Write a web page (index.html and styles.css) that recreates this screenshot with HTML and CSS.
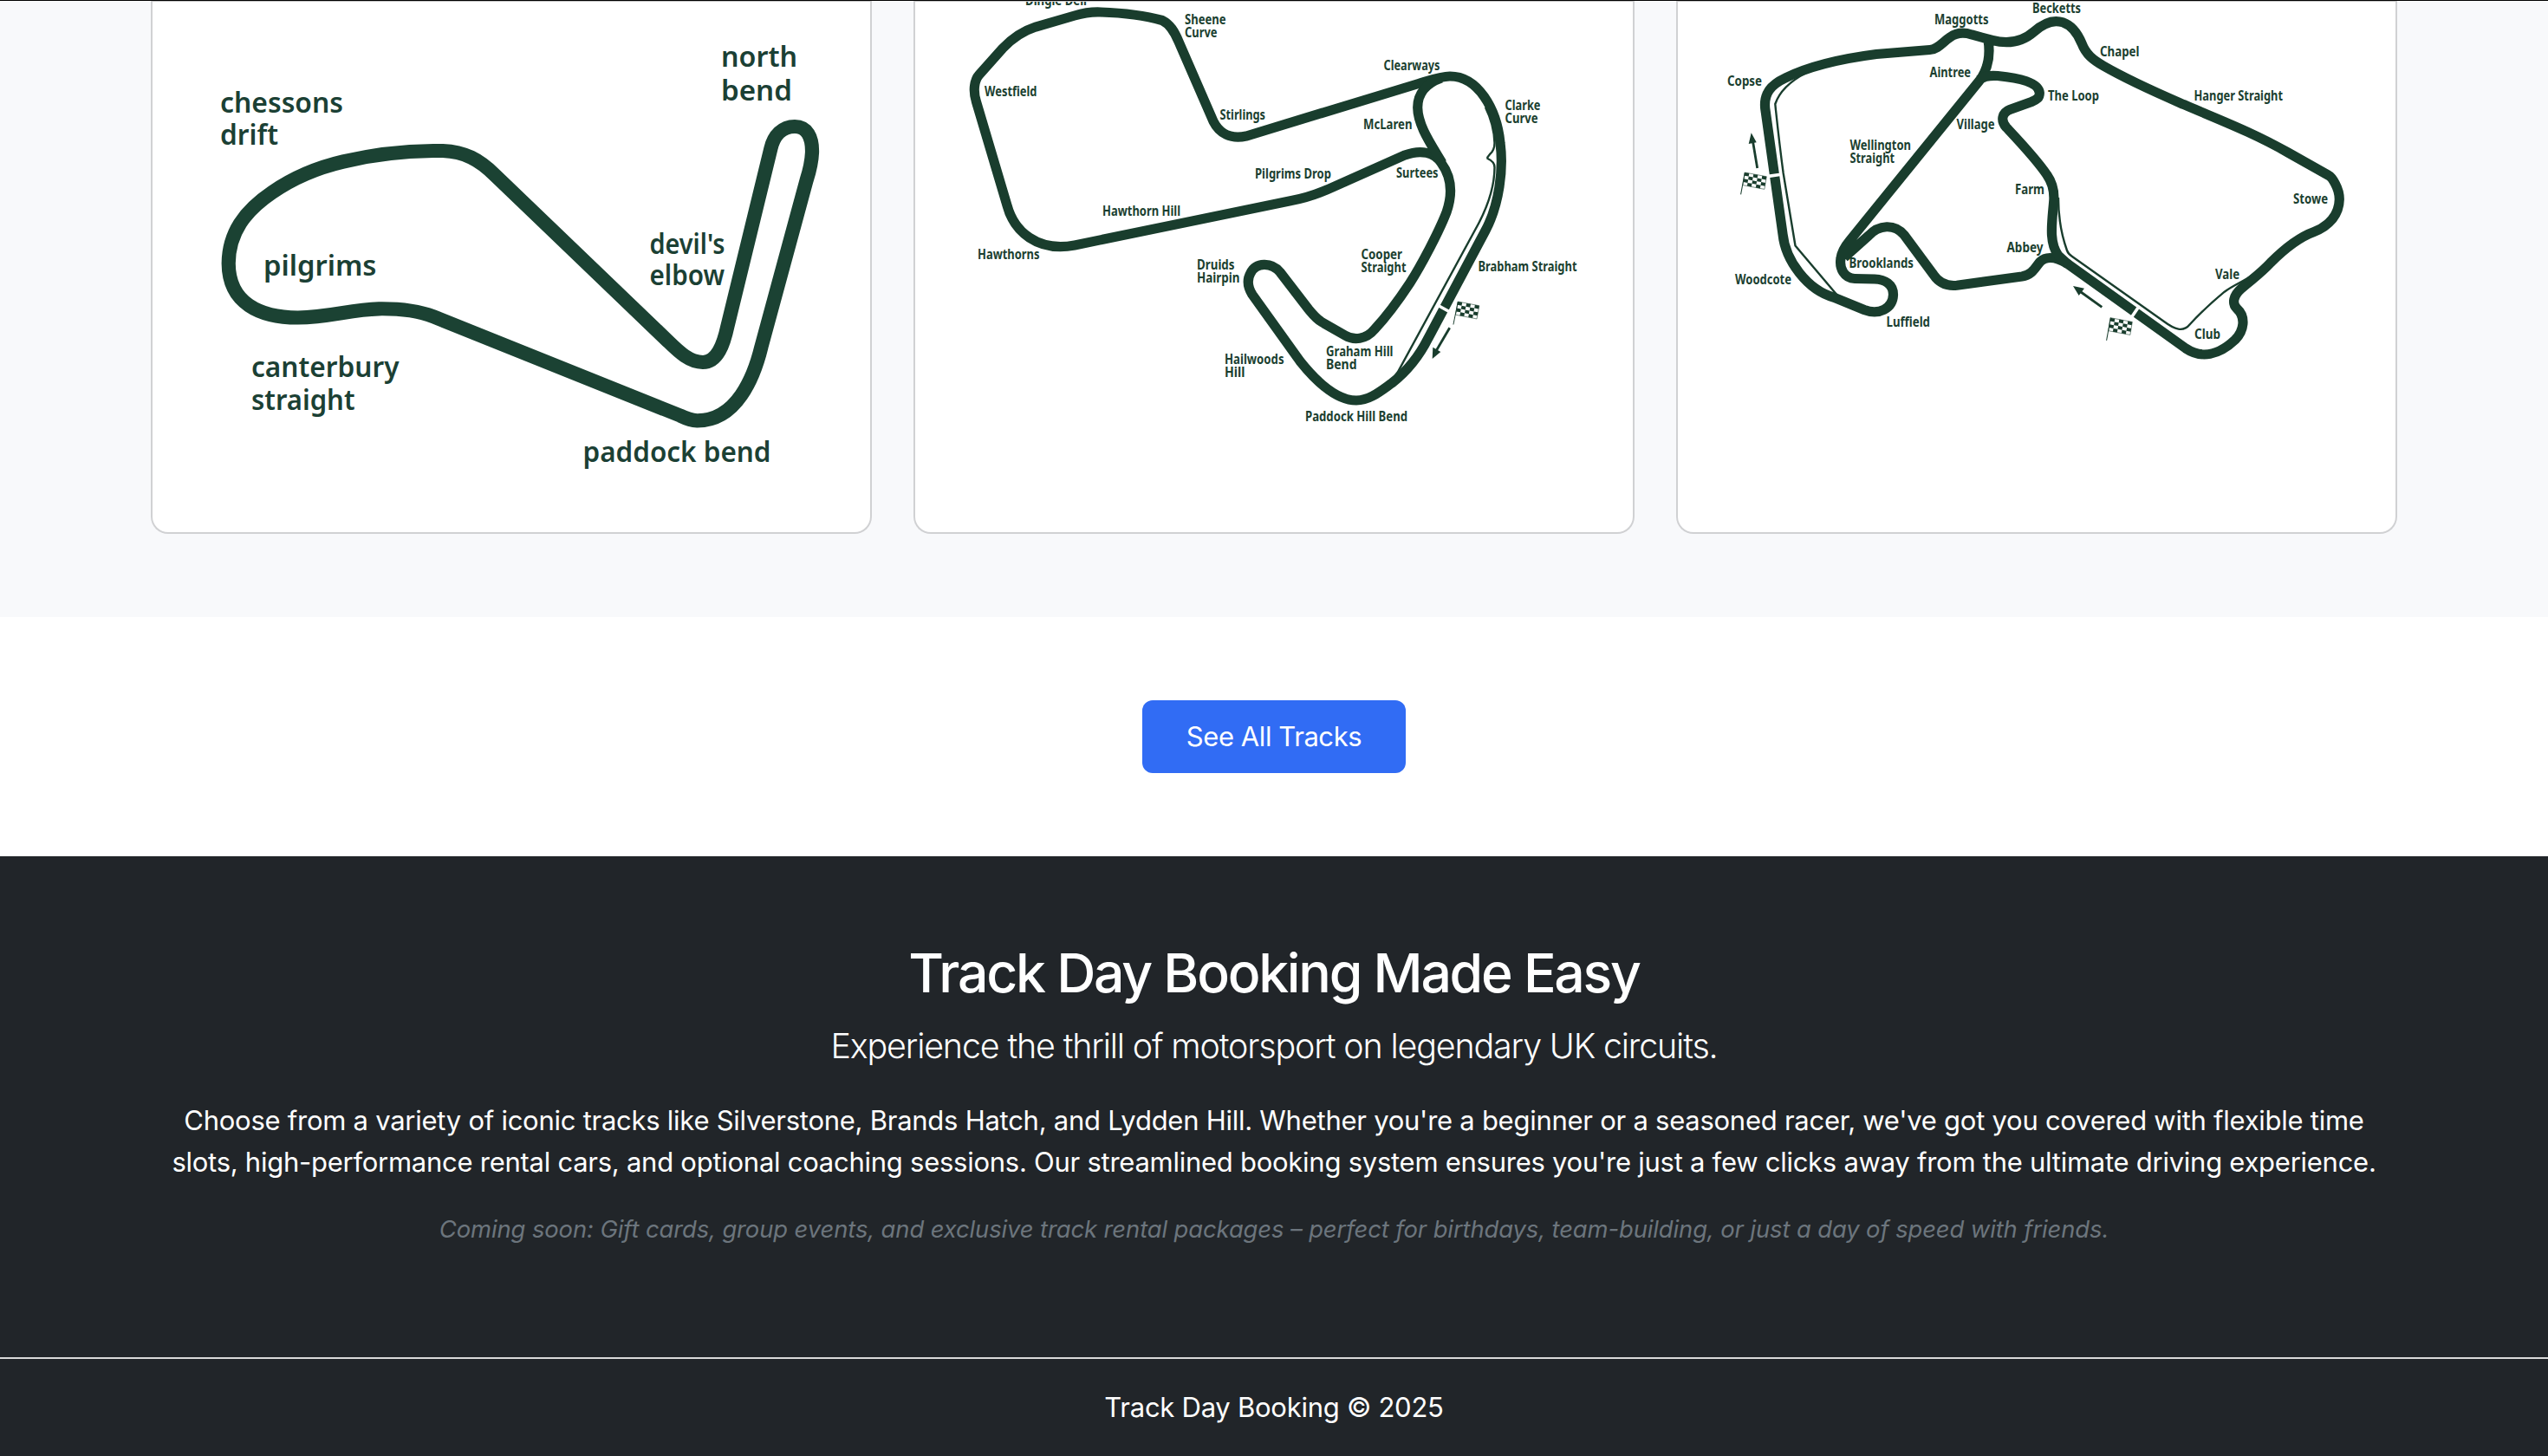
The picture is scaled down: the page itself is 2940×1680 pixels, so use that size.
FILE: index.html
```html
<!DOCTYPE html>
<html lang="en">
<head>
<meta charset="utf-8">
<title>Track Day Booking</title>
<link rel="stylesheet" href="styles.css">
</head>
<body>
<svg class="defs" width="0" height="0" aria-hidden="true">
  <defs>
    <g id="flag">
      <rect class="flag-cloth" width="5" height="4"/>
      <path class="flag-checks" d="M0 0h1v1h-1zM2 0h1v1h-1zM4 0h1v1h-1zM1 1h1v1h-1zM3 1h1v1h-1zM0 2h1v1h-1zM2 2h1v1h-1zM4 2h1v1h-1zM1 3h1v1h-1zM3 3h1v1h-1z"/>
      <path class="flag-pole" d="M0 0L-.1 7"/>
    </g>
  </defs>
</svg>

<section class="tracks">
  <div class="container track-grid">
    <article class="card">
      <svg class="map map-lydden" viewBox="176 2 828 612" role="img" aria-label="Lydden Hill">
        <path class="road" d="M263.7 304C264 268 283 243 314 222C340 204 368 193 396 186.5C425 179.5 460 174.5 500 174L511 174C536 175 553 184 571 202L768.8 391.8C782 404.5 794 417.5 811 418C828 418 835 397 839.5 376L889.4 171.4C893 156 903 146 917 146C931 146 937.5 158 937 176C936.5 188 933.5 199 930.6 208L878.5 400C870 435 850 485.5 804.4 485.3C797 485 791 482.5 785 479.6L500 365.3C480 357.5 460 356 437 356.3C405 357 380 366 343.7 366.5C300 366.5 264 350 263.7 304Z"/>
        <g class="names">
          <text x="254" y="130" textLength="142" lengthAdjust="spacingAndGlyphs">chessons</text>
          <text x="254" y="167" textLength="67" lengthAdjust="spacingAndGlyphs">drift</text>
          <text x="304" y="318" textLength="130.5" lengthAdjust="spacingAndGlyphs">pilgrims</text>
          <text x="290" y="435" textLength="170.5" lengthAdjust="spacingAndGlyphs">canterbury</text>
          <text x="290" y="473" textLength="119.5" lengthAdjust="spacingAndGlyphs">straight</text>
          <text x="832" y="77" textLength="88" lengthAdjust="spacingAndGlyphs">north</text>
          <text x="832" y="115.5" textLength="82" lengthAdjust="spacingAndGlyphs">bend</text>
          <text x="749.5" y="292.5" textLength="87" lengthAdjust="spacingAndGlyphs">devil's</text>
          <text x="749.5" y="328.5" textLength="86.5" lengthAdjust="spacingAndGlyphs">elbow</text>
          <text x="672.5" y="533" textLength="217" lengthAdjust="spacingAndGlyphs">paddock bend</text>
        </g>
      </svg>
    </article>

    <article class="card">
      <svg class="map" viewBox="1056 2 828 612" role="img" aria-label="Brands Hatch">
        <path class="road" d="M1270 14C1258 13.5 1250 15 1240 18L1195 31C1178 36.5 1167 45 1156.7 56L1130 86C1124 92.5 1122.5 105 1126.5 117.5L1162 237C1170 267 1197 291 1240 283L1490 231.5C1510 228 1525 222 1540 215L1621 179C1640 172 1655 176 1663 188C1674 203 1677 222 1669 245C1660 268 1640 306 1626.7 326.7C1612 349 1599 366 1586 380C1576 392 1562 393 1552 387L1525 371.5C1519 368 1515 363 1510 357L1477 314C1467 302 1449 302.5 1443 315C1439 322 1439.5 331 1445 340L1500 416.7C1521 443 1543 462 1565 462C1580 462 1592 452 1606 442C1624 428 1638 410 1648 390L1714 266C1730 236 1735 195 1731 165C1727 125 1705 88 1673 88C1662 88 1650 92.5 1636.7 96.5L1438 157C1420 161 1407 154 1400 140L1360 48C1355 36 1350 28 1341 23.5C1325 19 1300 15 1270 14Z"/>
        <path class="road" d="M1663 90C1646 96 1635.7 108 1635.7 124C1636 145 1651 166 1664 188"/>
        <path class="pit" d="M1714 124C1721 138 1724 150 1724.5 165C1724.5 172 1722 175.5 1719 178L1716.3 181.5L1716.5 183C1721 185 1724.5 188 1724.5 193C1724.5 215 1718 235 1706 258L1613 429L1604 441"/>
        <path class="line" d="M1659.5 352.5L1672.5 359.8"/>
        <path class="shaft" d="M1672.7 378.3L1657 405"/>
        <path class="head" d="M1652.7 414L1653.3 400.7L1662.3 406Z"/>
        <use href="#flag" transform="matrix(4.9 .95 -.7 3.8 1682.3 348)"/>
        <g class="names small">
          <text x="1183" y="5.5" textLength="71" lengthAdjust="spacingAndGlyphs">Dingle Dell</text>
          <text x="1367" y="28" textLength="47.5" lengthAdjust="spacingAndGlyphs">Sheene</text>
          <text x="1367" y="42.8" textLength="37.5" lengthAdjust="spacingAndGlyphs">Curve</text>
          <text x="1136" y="111" textLength="60.5" lengthAdjust="spacingAndGlyphs">Westfield</text>
          <text x="1407.5" y="137.7" textLength="52.5" lengthAdjust="spacingAndGlyphs">Stirlings</text>
          <text x="1448" y="205.7" textLength="88" lengthAdjust="spacingAndGlyphs">Pilgrims Drop</text>
          <text x="1272" y="249.3" textLength="90" lengthAdjust="spacingAndGlyphs">Hawthorn Hill</text>
          <text x="1128" y="299" textLength="71.5" lengthAdjust="spacingAndGlyphs">Hawthorns</text>
          <text x="1381" y="310.7" textLength="43.5" lengthAdjust="spacingAndGlyphs">Druids</text>
          <text x="1381" y="325.7" textLength="49.5" lengthAdjust="spacingAndGlyphs">Hairpin</text>
          <text x="1596.5" y="80.5" textLength="65" lengthAdjust="spacingAndGlyphs">Clearways</text>
          <text x="1573" y="149" textLength="56.5" lengthAdjust="spacingAndGlyphs">McLaren</text>
          <text x="1611" y="205" textLength="48.5" lengthAdjust="spacingAndGlyphs">Surtees</text>
          <text x="1736.5" y="127" textLength="41" lengthAdjust="spacingAndGlyphs">Clarke</text>
          <text x="1736.5" y="142" textLength="38" lengthAdjust="spacingAndGlyphs">Curve</text>
          <text x="1570.5" y="299" textLength="47.5" lengthAdjust="spacingAndGlyphs">Cooper</text>
          <text x="1570.5" y="314" textLength="52" lengthAdjust="spacingAndGlyphs">Straight</text>
          <text x="1705.5" y="313" textLength="114" lengthAdjust="spacingAndGlyphs">Brabham Straight</text>
          <text x="1530" y="411" textLength="77.5" lengthAdjust="spacingAndGlyphs">Graham Hill</text>
          <text x="1530" y="426" textLength="35.5" lengthAdjust="spacingAndGlyphs">Bend</text>
          <text x="1413" y="419.5" textLength="68.5" lengthAdjust="spacingAndGlyphs">Hailwoods</text>
          <text x="1413" y="434.5" textLength="23.5" lengthAdjust="spacingAndGlyphs">Hill</text>
          <text x="1506" y="486" textLength="118" lengthAdjust="spacingAndGlyphs">Paddock Hill Bend</text>
        </g>
      </svg>
    </article>

    <article class="card">
      <svg class="map" viewBox="1936 2 828 612" role="img" aria-label="Silverstone">
        <path class="road" d="M2128 297L2156 272C2168 259 2186 258 2197 271L2231 317C2237 326 2246 330.5 2258 329.3L2333 319C2345 317 2348 309 2354 302C2362 294 2375 298 2385 304L2522 402C2540 414 2560 410 2579 392C2589 382 2592 366 2581 356C2575 350 2577 341 2586 333C2600 321 2609 315 2620 303C2632 291 2652 274 2670 267.5C2687 261 2699 248 2699.3 230C2699.3 216 2690 204 2687 202.5L2640 176C2600 153 2560 138 2520 120.7C2500 112 2460 95 2427 76C2415 69 2407 63 2402 50C2392 26 2372 14 2347 36.5C2335 47 2320 52 2299 46.5L2275 40C2266 37 2257 38 2250 43C2242 48 2236 57 2226.7 57.5L2165 62.5C2130 67 2090 75 2060 90C2043 98 2035 108 2036.7 125L2057 270C2060 300 2085 335 2117 343.5L2151 357.5C2168 364 2184 356 2184.5 340C2184.5 328 2175 322.5 2163 322L2140 321.5C2128 321 2122 310 2124 298C2125 290 2129 284 2134 278L2284 93C2293 81 2297 65 2294 46"/>
        <path class="road" d="M2284 92C2290 87 2297 87 2305 87.5C2330 90 2352 95 2353.3 107C2353.5 113 2350 115 2344 117.5L2319 126.5C2310 130 2308 139 2315 147C2330 163 2350 184 2362 202C2369 212 2371 222 2369.5 235C2367.5 258 2364 280 2375 295L2386 305"/>
        <path class="pit" d="M2084 84C2065 94 2053 106 2048.3 120L2049 127C2052 155 2055 180 2057.7 200L2071.5 283.5L2121 342"/>
        <path class="pit" d="M2375 228C2375 252 2380 275 2385 289C2386 292 2388 294 2391 296L2497 371C2509 380 2519 384 2527 374C2537 363 2552 349 2566.7 336.7C2577 329 2588 325 2600 317"/>
        <path class="line" d="M2040.5 203.4L2055 201.3M2467 355L2458.5 367.5"/>
        <path class="shaft" d="M2027.7 194L2022.5 163M2425.3 354.3L2399 335.5"/>
        <path class="head" d="M2020.7 153.3L2017.7 166L2026.7 164.3ZM2392 330L2405 332.7L2398.7 341Z"/>
        <use href="#flag" transform="matrix(5 .95 -.6 3.65 2013.3 199)"/>
        <use href="#flag" transform="matrix(5 .95 -.6 3.75 2435.3 366.7)"/>
        <g class="names small">
          <text x="2232" y="27.5" textLength="62.5" lengthAdjust="spacingAndGlyphs">Maggotts</text>
          <text x="2345" y="15" textLength="56" lengthAdjust="spacingAndGlyphs">Becketts</text>
          <text x="2226.5" y="88.5" textLength="47.5" lengthAdjust="spacingAndGlyphs">Aintree</text>
          <text x="1993" y="99" textLength="40" lengthAdjust="spacingAndGlyphs">Copse</text>
          <text x="2257.5" y="149" textLength="44" lengthAdjust="spacingAndGlyphs">Village</text>
          <text x="2363" y="115.5" textLength="59" lengthAdjust="spacingAndGlyphs">The Loop</text>
          <text x="2423" y="65" textLength="45.5" lengthAdjust="spacingAndGlyphs">Chapel</text>
          <text x="2531.5" y="115.5" textLength="102.5" lengthAdjust="spacingAndGlyphs">Hanger Straight</text>
          <text x="2134.5" y="173" textLength="70.5" lengthAdjust="spacingAndGlyphs">Wellington</text>
          <text x="2134.5" y="188" textLength="51.5" lengthAdjust="spacingAndGlyphs">Straight</text>
          <text x="2325" y="224" textLength="34" lengthAdjust="spacingAndGlyphs">Farm</text>
          <text x="2315.5" y="290.8" textLength="42" lengthAdjust="spacingAndGlyphs">Abbey</text>
          <text x="2133.5" y="309" textLength="74.5" lengthAdjust="spacingAndGlyphs">Brooklands</text>
          <text x="2002" y="328" textLength="65" lengthAdjust="spacingAndGlyphs">Woodcote</text>
          <text x="2176.5" y="377" textLength="50.5" lengthAdjust="spacingAndGlyphs">Luffield</text>
          <text x="2646" y="234.5" textLength="40" lengthAdjust="spacingAndGlyphs">Stowe</text>
          <text x="2556" y="322" textLength="28" lengthAdjust="spacingAndGlyphs">Vale</text>
          <text x="2532" y="391" textLength="30" lengthAdjust="spacingAndGlyphs">Club</text>
        </g>
      </svg>
    </article>
  </div>
</section>

<section class="more">
  <a class="btn" href="#">See All Tracks</a>
</section>

<section class="about">
  <div class="container">
    <h2>Track Day Booking Made Easy</h2>
    <p class="lead">Experience the thrill of motorsport on legendary UK circuits.</p>
    <p class="body">Choose from a variety of iconic tracks like Silverstone, Brands Hatch, and Lydden Hill. Whether you're a beginner or a seasoned racer, we've got you covered with flexible time<br>slots, high-performance rental cars, and optional coaching sessions. Our streamlined booking system ensures you're just a few clicks away from the ultimate driving experience.</p>
    <p class="soon">Coming soon: Gift cards, group events, and exclusive track rental packages – perfect for birthdays, team-building, or just a day of speed with friends.</p>
  </div>
</section>

<footer class="footer">Track Day Booking © 2025</footer>
</body>
</html>
```
FILE: styles.css
```css
* { box-sizing: border-box; }

body {
  margin: 0;
  background: #fff;
  color: #fff;
  font-family: Inter, "Liberation Sans", sans-serif;
  font-size: 31px;
  letter-spacing: -.26px;
  line-height: 48px;
}

h2, p { margin: 0; }

.defs { position: absolute; }

.container {
  width: 2640px;
  margin: 0 auto;
  padding: 0 24px;
}

/* Circuit cards */
.tracks {
  height: 712px;
  padding-bottom: 96px;
  border-top: 1px solid #000;
  background: #f8f9fb;
}

.track-grid {
  display: grid;
  grid-template-columns: repeat(3, 1fr);
  gap: 48px;
  height: 100%;
}

.card {
  border: 2px solid #d0d1d3;
  border-top: 1px solid #c4c4c4;
  border-radius: 0 0 20px 20px;
  background: #fff;
  overflow: hidden;
}

.map {
  display: block;
  width: 828px;
  height: 612px;
}

.road {
  fill: none;
  stroke: #193d2d;
  stroke-width: 11.2;
}

.map-lydden .road {
  stroke: #1b4233;
  stroke-width: 16.2;
}

.pit {
  fill: none;
  stroke: #193d2d;
  stroke-width: 2.4;
}

.line {
  stroke: #fff;
  stroke-width: 3.6;
}

.shaft {
  stroke: #193d2d;
  stroke-width: 2.8;
}

.head { fill: #193d2d; }

.flag-cloth {
  fill: #fff;
  stroke: #193d2d;
  stroke-width: .12;
}

.flag-checks { fill: #193d2d; }

.flag-pole {
  stroke: #193d2d;
  stroke-width: .2;
}

.names {
  fill: #1b4034;
  font: 600 31.5px "Noto Sans", sans-serif;
  letter-spacing: 0;
}

.names.small {
  fill: #1b3f30;
  font-size: 15.2px;
  font-weight: 700;
}

/* Call to action */
.more {
  display: flex;
  justify-content: center;
  padding: 96px 0;
}

.btn {
  width: 304px;
  padding: 18px 0;
  border-radius: 12px;
  background: #316cf4;
  color: #fff;
  letter-spacing: -.42px;
  text-align: center;
  text-decoration: none;
}

/* About */
.about {
  height: 578px;
  padding: 96px 0;
  background: #212529;
  text-align: center;
  white-space: nowrap;
}

.about h2 {
  margin-bottom: 16px;
  padding-top: 1px;
  font-size: 62.5px;
  font-weight: 550;
  letter-spacing: -2.25px;
  line-height: 75.8px;
}

.lead {
  margin-bottom: 32px;
  font-size: 39.4px;
  font-weight: 330;
  letter-spacing: -1.15px;
  line-height: 60px;
}

.body { margin-bottom: 32px; }

.soon {
  color: #6c757d;
  font-size: 27.4px;
  font-style: italic;
  letter-spacing: -.1px;
  line-height: 42px;
}

.footer {
  height: 114px;
  padding: 32px 0;
  border-top: 2px solid #d9d9d9;
  background: #212529;
  text-align: center;
}
```
